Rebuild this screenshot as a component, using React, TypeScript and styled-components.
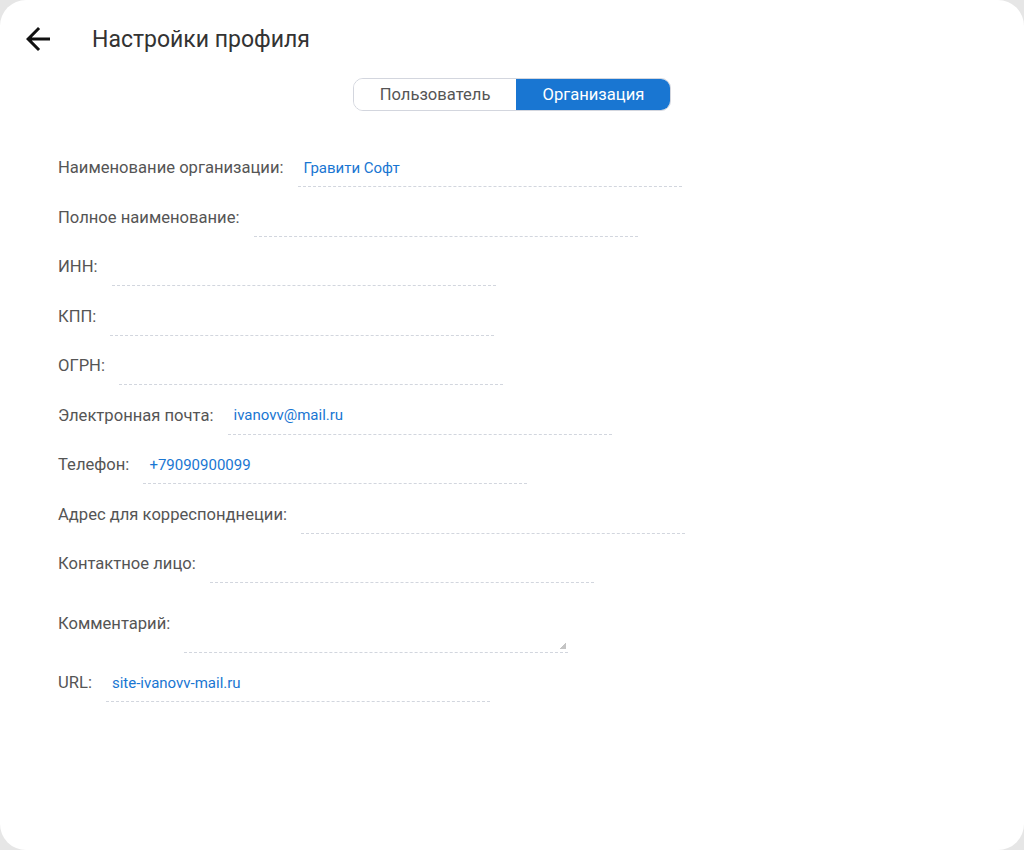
import { useState } from "react";
import styled, { createGlobalStyle } from "styled-components";

const GlobalStyle = createGlobalStyle`
  html, body {
    margin: 0;
    padding: 0;
    background: #e6e6e6;
    font-family: Roboto, "Liberation Sans", Arial, sans-serif;
  }
  * {
    box-sizing: border-box;
  }
`;

interface FieldDef {
  key: string;
  label: string;
  value: string;
  multiline?: boolean;
}

const fields: FieldDef[] = [
  { key: "name", label: "Наименование организации:", value: "Гравити Софт" },
  { key: "fullName", label: "Полное наименование:", value: "" },
  { key: "inn", label: "ИНН:", value: "" },
  { key: "kpp", label: "КПП:", value: "" },
  { key: "ogrn", label: "ОГРН:", value: "" },
  { key: "email", label: "Электронная почта:", value: "ivanovv@mail.ru" },
  { key: "phone", label: "Телефон:", value: "+79090900099" },
  { key: "address", label: "Адрес для корреспонднеции:", value: "" },
  { key: "contact", label: "Контактное лицо:", value: "" },
  { key: "comment", label: "Комментарий:", value: "", multiline: true },
  { key: "url", label: "URL:", value: "site-ivanovv-mail.ru" },
];

export default function App() {
  const [tab, setTab] = useState<"user" | "org">("org");
  const [form, setForm] = useState<Record<string, string>>(
    Object.fromEntries(fields.map((f) => [f.key, f.value])),
  );

  const updateField =
    (key: string) =>
    (e: React.ChangeEvent<HTMLInputElement | HTMLTextAreaElement>) => {
      setForm((prev) => ({ ...prev, [key]: e.target.value }));
    };

  return (
    <>
      <GlobalStyle />
      <Screen>
        <Header>
          <BackBtn type="button" aria-label="Назад">
            <svg viewBox="0 0 24 24">
              <path
                d="M20 11H7.83l5.59-5.59L12 4l-8 8 8 8 1.41-1.41L7.83 13H20v-2z"
                fill="#111"
              />
            </svg>
          </BackBtn>
          <Title>Настройки профиля</Title>
        </Header>

        <TabsRow>
          <Tabs>
            <TabBtn
              type="button"
              $active={tab === "user"}
              onClick={() => setTab("user")}
            >
              Пользователь
            </TabBtn>
            <TabBtn
              type="button"
              $active={tab === "org"}
              onClick={() => setTab("org")}
            >
              Организация
            </TabBtn>
          </Tabs>
        </TabsRow>

        <Form>
          {fields.map((f) => (
            <Row key={f.key}>
              <Label htmlFor={f.key}>{f.label}</Label>
              {f.multiline ? (
                <TextArea
                  id={f.key}
                  value={form[f.key]}
                  onChange={updateField(f.key)}
                />
              ) : (
                <Input
                  id={f.key}
                  value={form[f.key]}
                  onChange={updateField(f.key)}
                />
              )}
            </Row>
          ))}
        </Form>
      </Screen>
    </>
  );
}

const Screen = styled.div`
  width: 1024px;
  height: 850px;
  background: #fff;
  border-radius: 26px;
  overflow: hidden;
  display: flex;
  flex-direction: column;
`;

const Header = styled.div`
  display: flex;
  align-items: center;
  height: 78px;
  padding: 0 0 0 20px;
  gap: 36px;
`;

const BackBtn = styled.button`
  width: 36px;
  height: 36px;
  border: none;
  background: none;
  padding: 0;
  display: flex;
  align-items: center;
  justify-content: center;
  cursor: pointer;

  svg {
    width: 36px;
    height: 36px;
  }
`;

const Title = styled.h1`
  margin: 0;
  font-size: 23px;
  font-weight: 400;
  color: #333;
`;

const TabsRow = styled.div`
  display: flex;
  justify-content: center;
`;

const Tabs = styled.div`
  display: flex;
  border: 1px solid #d3d6de;
  border-radius: 10px;
  overflow: hidden;
  height: 33px;
`;

const TabBtn = styled.button<{ $active: boolean }>`
  border: none;
  padding: 0 26px;
  font-family: inherit;
  font-size: 16.6px;
  cursor: pointer;
  background: ${(p) => (p.$active ? "#1976d2" : "#fff")};
  color: ${(p) => (p.$active ? "#fff" : "#555")};
`;

const Form = styled.div`
  display: flex;
  flex-direction: column;
  gap: 11.5px;
  padding: 38px 0 0 58px;
`;

const Row = styled.div`
  display: flex;
  align-items: center;
  gap: 14px;
`;

const Label = styled.label`
  font-size: 16.6px;
  line-height: 38px;
  color: #555;
  white-space: nowrap;
`;

const fieldBase = `
  width: 384px;
  border: none;
  border-bottom: 1px dashed #d2d6de;
  background: transparent;
  font-family: inherit;
  font-size: 15px;
  color: #1976d2;
  padding: 0 6px;
  outline: none;
`;

const Input = styled.input`
  ${fieldBase}
  height: 38px;
`;

const TextArea = styled.textarea`
  ${fieldBase}
  height: 58px;
  padding-top: 8px;
  resize: vertical;

  &::-webkit-resizer {
    background: linear-gradient(135deg, transparent 50%, #c4c4c4 50%) no-repeat
      right 2px bottom 3px / 6px 6px;
  }
`;
